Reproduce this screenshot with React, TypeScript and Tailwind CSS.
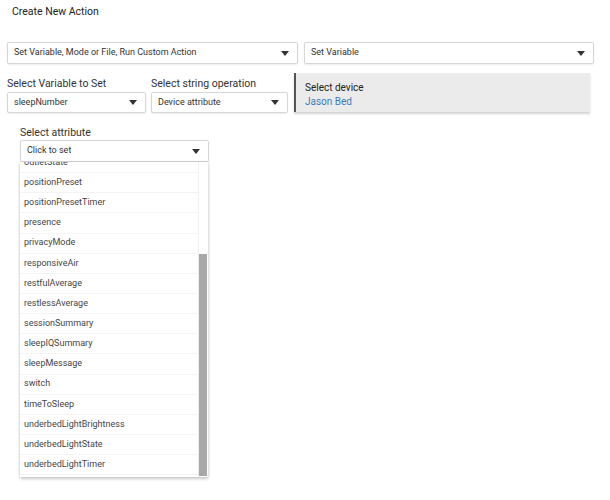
import { useState } from 'react'

const attributes = [
  'outletState',
  'positionPreset',
  'positionPresetTimer',
  'presence',
  'privacyMode',
  'responsiveAir',
  'restfulAverage',
  'restlessAverage',
  'sessionSummary',
  'sleepIQSummary',
  'sleepMessage',
  'switch',
  'timeToSleep',
  'underbedLightBrightness',
  'underbedLightState',
  'underbedLightTimer',
]

function Caret() {
  return (
    <svg width="8" height="5" viewBox="0 0 8 5" className="shrink-0">
      <path d="M0 0h8L4 5z" fill="#333" />
    </svg>
  )
}

function SelectBox({
  value,
  className = '',
}: {
  value: string
  className?: string
}) {
  return (
    <div
      className={`flex items-center justify-between h-[21px] pl-[6px] pr-[8px] bg-white border border-[#d6d6d6] rounded-[2px] shadow-[0_1px_2px_rgba(0,0,0,0.08)] text-[9px] text-[#333] ${className}`}
    >
      <span className="truncate">{value}</span>
      <Caret />
    </div>
  )
}

export default function App() {
  const [selected] = useState('Click to set')

  return (
    <div className="w-[610px] h-[500px] bg-white font-['Roboto','Liberation_Sans',sans-serif] text-[#222]">
      <div className="pl-[12px] pt-[5px] text-[10.5px] leading-[14px] text-[#222]">Create New Action</div>

      <div className="flex gap-[6px] pl-[7px] mt-[23px]">
        <SelectBox value="Set Variable, Mode or File, Run Custom Action" className="w-[291px] h-[22px]" />
        <SelectBox value="Set Variable" className="w-[290px] h-[22px]" />
      </div>

      <div className="flex items-start pl-[7px] mt-[13px]">
        <div className="w-[139px]">
          <div className="text-[10.5px] leading-[14px] text-[#333] mb-[1px]">Select Variable to Set</div>
          <SelectBox value="sleepNumber" />
        </div>
        <div className="w-[137px] ml-[5px]">
          <div className="text-[10.5px] leading-[14px] text-[#333] mb-[1px]">Select string operation</div>
          <SelectBox value="Device attribute" />
        </div>
        <div className="ml-[6px] w-[296px] h-[39px] -mt-[4px] bg-[#ebebeb] border-l-2 border-[#555] shadow-[0_2px_2px_rgba(0,0,0,0.18)] pl-[9px] pt-[8px]">
          <div className="text-[10px] leading-[14px] text-[#222]">Select device</div>
          <div className="text-[10px] leading-[14px] text-[#3b7bbf]">Jason Bed</div>
        </div>
      </div>

      <div className="pl-[20px] mt-[13px] w-[210px]">
        <div className="text-[10.5px] leading-[14px] text-[#333]">Select attribute</div>
        <SelectBox value={selected} className="border-[#a9bcd3] w-[189px] h-[22px]" />
        <div className="relative w-[188px] h-[315px] overflow-hidden bg-white shadow-[0_2px_3px_rgba(0,0,0,0.2),1px_0_2px_rgba(0,0,0,0.06),-1px_0_2px_rgba(0,0,0,0.06)]">
          <div className="-mt-[9px] pr-[10px]">
            {attributes.map((a) => (
              <div
                key={a}
                className="h-[20.15px] flex items-center pl-[4px] text-[9px] text-[#444] border-b border-[#f3f3f3]"
              >
                {a}
              </div>
            ))}
          </div>
          <div className="absolute top-0 right-[1px] w-[9px] h-full bg-white border-l border-[#eee]">
            <div className="absolute left-0 right-0 top-[92px] bottom-[1px] bg-[#a8a8a8]" />
          </div>
        </div>
      </div>
    </div>
  )
}
